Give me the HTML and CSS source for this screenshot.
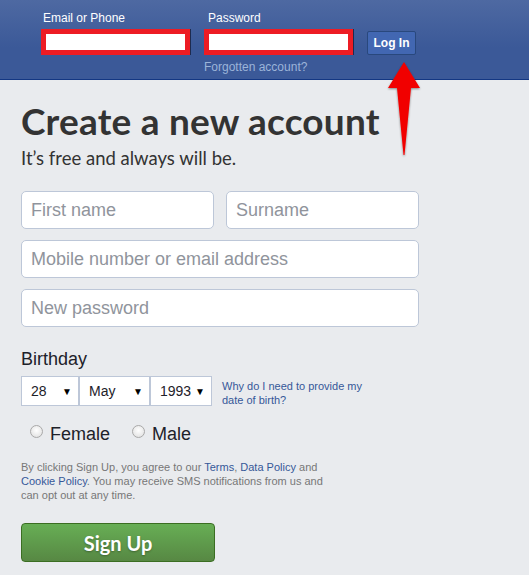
FILE: index.html
```html
<!DOCTYPE html>
<html>
<head>
<meta charset="utf-8">
<link rel="stylesheet" href="styles.css">
</head>
<body>
<header class="topbar">
  <div class="login">
    <div class="field">
      <label class="field-label">Email or Phone</label>
      <div class="red-input"></div>
    </div>
    <div class="field">
      <label class="field-label pw">Password</label>
      <div class="red-input"></div>
      <a class="forgot">Forgotten account?</a>
    </div>
    <button class="login-btn">Log In</button>
  </div>
</header>
<main class="content">
  <h1 class="title">Create a new account</h1>
  <p class="subtitle">It’s free and always will be.</p>
  <div class="row two">
    <div class="box">First name</div>
    <div class="box">Surname</div>
  </div>
  <div class="row"><div class="box">Mobile number or email address</div></div>
  <div class="row"><div class="box">New password</div></div>
  <div class="bday-label">Birthday</div>
  <div class="bday">
    <div class="selects">
      <div class="sel day"><span>28</span><span class="caret">▼</span></div>
      <div class="sel month"><span>May</span><span class="caret">▼</span></div>
      <div class="sel year"><span>1993</span><span class="caret">▼</span></div>
    </div>
    <a class="why">Why do I need to provide my date of birth?</a>
  </div>
  <div class="gender">
    <span class="opt"><span class="radio"></span>Female</span>
    <span class="opt"><span class="radio"></span>Male</span>
  </div>
  <p class="terms">By clicking Sign Up, you agree to our <a>Terms</a>, <a>Data Policy</a> and <a>Cookie Policy</a>. You may receive SMS notifications from us and can opt out at any time.</p>
  <button class="signup">Sign Up</button>
</main>
<svg class="arrow" width="44" height="106" viewBox="0 0 44 106">
  <defs>
    <filter id="sh" x="-30%" y="-30%" width="160%" height="160%">
      <feGaussianBlur in="SourceAlpha" stdDeviation="1.2"/>
      <feOffset dx="0" dy="1"/>
      <feComponentTransfer><feFuncA type="linear" slope="0.45"/></feComponentTransfer>
      <feMerge><feMergeNode/><feMergeNode in="SourceGraphic"/></feMerge>
    </filter>
  </defs>
  <path d="M22 3 L38 29 L29 29 L22.5 96 L21.5 96 L15 29 L6 29 Z" fill="#f10000" filter="url(#sh)"/>
</svg>
</body>
</html>
```
FILE: styles.css
```css
html, body { margin: 0; padding: 0; }
body {
  background: #e9ebee;
  font-family: "Liberation Sans", Arial, sans-serif;
  color: #1d2129;
  width: 529px;
  height: 575px;
  overflow: hidden;
  position: relative;
}
.topbar {
  height: 79px;
  background: linear-gradient(#4e69a2, #3b5998 60%, #3b5998);
  border-bottom: 1px solid #133783;
  box-sizing: content-box;
}
.login {
  display: flex;
  align-items: flex-start;
  padding-left: 41px;
  padding-top: 11px;
}
.field { display: flex; flex-direction: column; margin-right: 14px; }
.field-label {
  color: #fff;
  font-size: 12px;
  line-height: 15px;
  padding-left: 2px;
  margin-bottom: 3px;
}
.field-label.pw { padding-left: 4px; }
.red-input {
  width: 139px;
  height: 16px;
  background: #fff;
  border: 5px solid #ed1c24;
  box-shadow: 1px 0 0 #1d2b50;
}
.forgot {
  color: #9cb4d8;
  font-size: 12px;
  line-height: 15px;
  margin-top: 5px;
}
.login-btn {
  margin-left: 0;
  margin-top: 20px;
  width: 49px;
  height: 24px;
  background: #4267b2;
  border: 1px solid #29487d;
  border-radius: 2px;
  color: #fff;
  font-family: "Liberation Sans", Arial, sans-serif;
  font-weight: bold;
  font-size: 12px;
  padding: 0;
}
.content { padding-left: 21px; }
.title {
  margin: 0;
  padding-top: 19px;
  font-family: Lato, "Open Sans", sans-serif;
  font-weight: bold;
  font-size: 37px;
  line-height: 44px;
  color: #333;
  letter-spacing: 0.2px;
}
.subtitle {
  margin: 3px 0 0 0;
  font-family: Lato, "Open Sans", sans-serif;
  font-size: 18.5px;
  line-height: 24px;
  color: #333;
}
.row { display: flex; gap: 12px; width: 398px; margin-bottom: 11px; }
.row.two { margin-top: 21px; }
.box {
  flex: 1;
  box-sizing: border-box;
  height: 38px;
  background: #fff;
  border: 1px solid #bdc7d8;
  border-radius: 5px;
  padding-left: 9px;
  font-size: 18px;
  line-height: 36px;
  color: #90949c;
}
.bday-label {
  margin-top: 22px;
  font-size: 18px;
  line-height: 20px;
}
.bday {
  display: flex;
  align-items: flex-start;
  margin-top: 7px;
}
.selects { display: flex; }
.sel {
  box-sizing: border-box;
  height: 30px;
  background: #fff;
  border: 1px solid #bdc7d8;
  display: flex;
  align-items: center;
  justify-content: space-between;
  padding: 0 6px 0 9px;
  font-size: 14px;
  color: #1d2129;
}
.sel + .sel { margin-left: -1px; border-left-width: 2px; }
.day { width: 58px; }
.month { width: 72px; }
.year { width: 63px; padding-left: 9px; }
.caret { font-size: 10px; color: #000; }
.why {
  margin-left: 10px;
  margin-top: 3px;
  width: 150px;
  font-size: 11px;
  line-height: 14px;
  color: #365899;
}
.gender {
  display: flex;
  gap: 22px;
  margin-top: 16px;
  padding-left: 9px;
  font-size: 18px;
  line-height: 22px;
}
.opt { display: flex; align-items: flex-start; }
.radio {
  width: 11px;
  height: 11px;
  border-radius: 50%;
  border: 1px solid #a9a9a9;
  background: radial-gradient(circle at 50% 40%, #fff, #dcdcdc);
  margin-top: 2px;
  margin-right: 7px;
}
.terms {
  margin: 15px 0 0 0;
  width: 310px;
  font-size: 11px;
  line-height: 14px;
  color: #777;
}
.terms a { color: #365899; }
.signup {
  margin-top: 21px;
  width: 194px;
  height: 39px;
  border: 1px solid #3b6e22;
  border-radius: 4px;
  background: linear-gradient(#67ae55, #578843);
  color: #fff;
  font-family: Lato, "Open Sans", sans-serif;
  font-weight: bold;
  font-size: 20px;
  text-shadow: 0 1px 2px rgba(0,0,0,0.3);
  padding: 0;
}
.arrow { position: absolute; left: 382px; top: 59px; }
```
